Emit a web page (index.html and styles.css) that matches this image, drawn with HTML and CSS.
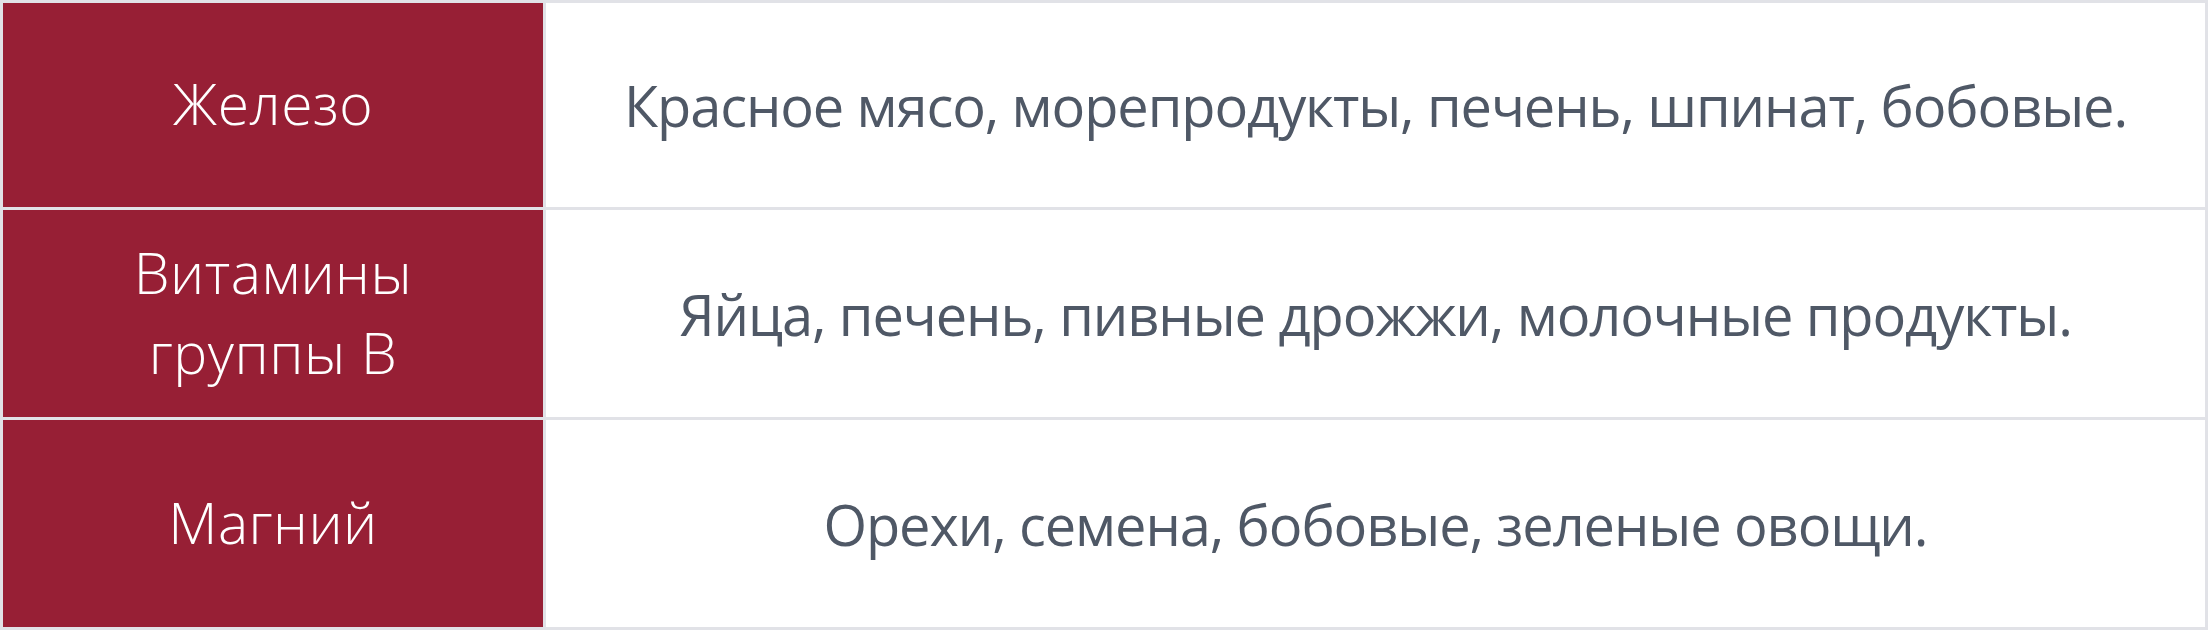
FILE: index.html
```html
<!DOCTYPE html>
<html lang="ru">
<head>
<meta charset="utf-8">
<link rel="stylesheet" href="styles.css">
</head>
<body>
<div class="table">
  <div class="cell head">Железо</div>
  <div class="cell body">Красное мясо, морепродукты, печень, шпинат, бобовые.</div>
  <div class="cell head">Витамины<br>группы В</div>
  <div class="cell body">Яйца, печень, пивные дрожжи, молочные продукты.</div>
  <div class="cell head">Магний</div>
  <div class="cell body">Орехи, семена, бобовые, зеленые овощи.</div>
</div>
</body>
</html>
```
FILE: styles.css
```css
html, body {
  margin: 0;
  padding: 0;
  background: #ffffff;
}
.table {
  width: 2208px;
  height: 630px;
  box-sizing: border-box;
  display: grid;
  grid-template-columns: 540px 1fr;
  grid-template-rows: 204px 207px 207px;
  gap: 3px;
  padding: 3px;
  background: #e1e2e7;
}
.cell {
  display: flex;
  align-items: center;
  justify-content: center;
  text-align: center;
  line-height: 80px;
}
.head {
  background: #971f35;
  color: #ffffff;
  font-family: "Open Sans", "Noto Sans", sans-serif;
  font-weight: 300;
  font-size: 57px;
  letter-spacing: 0.5px;
  padding-bottom: 4px;
}
.body {
  background: #ffffff;
  color: #4f5866;
  font-family: "Open Sans", "Noto Sans", sans-serif;
  font-weight: 400;
  font-size: 56px;
  letter-spacing: -1.1px;
}
```
